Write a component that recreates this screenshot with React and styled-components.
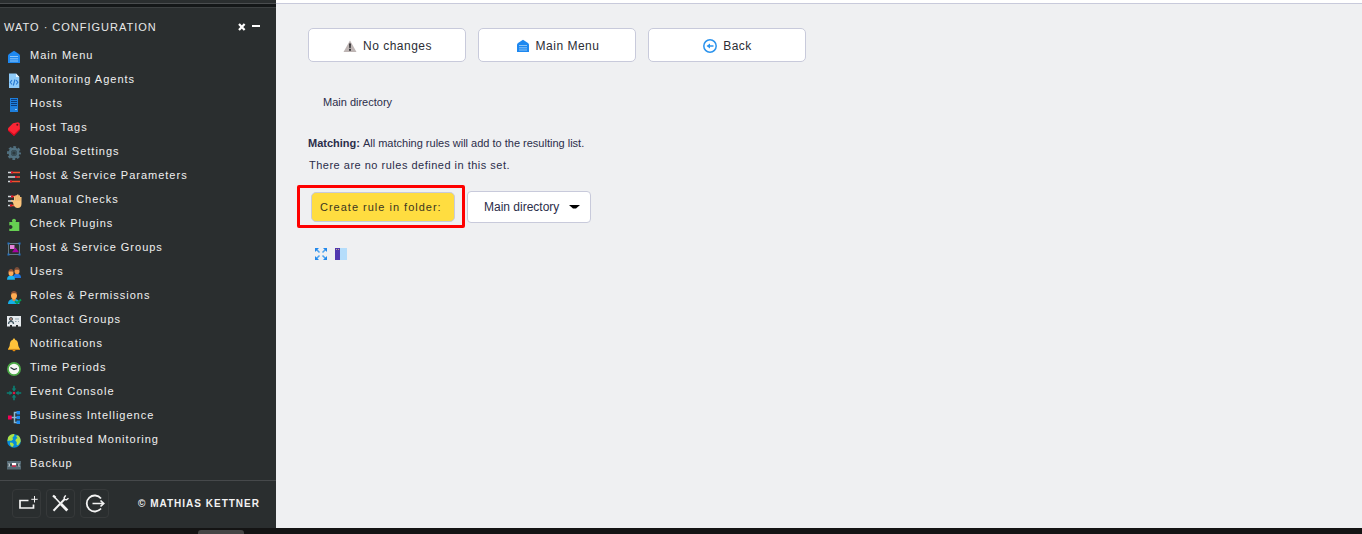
import React from "react";
import styled, { createGlobalStyle } from "styled-components";

const GlobalStyle = createGlobalStyle`
  * { box-sizing: border-box; }
  body {
    margin: 0;
    background: #eff0f2;
    font-family: "Liberation Sans", Arial, sans-serif;
    overflow: hidden;
  }
`;

const Screen = styled.div`
  width: 1362px;
  height: 534px;
  display: flex;
  flex-direction: column;
`;
const Workspace = styled.div`
  flex: 1;
  display: flex;
  min-height: 0;
`;
const Sidebar = styled.aside`
  width: 276px;
  background: #2a2e2f;
  display: flex;
  flex-direction: column;
`;
const SnapinGap = styled.div`
  height: 5px;
  margin-top: 3px;
  background: #141718;
  border-top: 1px solid #4a4d4f;
  border-bottom: 1px solid #3d4142;
`;
const SnapinHead = styled.header`
  height: 37px;
  padding: 0 15px 0 4px;
  display: flex;
  align-items: center;
  color: #e8e8e8;
  font-size: 11px;
  line-height: 14px;
  letter-spacing: 1px;
`;
const SnapinTitle = styled.span`
  flex: 1;
`;
const HeadIcons = styled.svg`
  width: 23px;
  height: 10px;
`;
const Menu = styled.ul`
  list-style: none;
  margin: 0;
  padding: 0;
  flex: 1;
`;
const MenuItem = styled.li`
  height: 24px;
  padding: 4px 0 4px 6px;
  display: flex;
  gap: 8px;
  color: #f0f0f0;
  font-size: 11px;
  line-height: 14px;
  letter-spacing: 1px;
  white-space: nowrap;
`;
const MenuLabel = styled.span`
  margin-top: -1px;
`;
const Icon = styled.svg`
  width: ${(p) => p.$size || 16}px;
  height: ${(p) => p.$size || 16}px;
  flex: none;
  overflow: visible;
`;
const Footer = styled.footer`
  height: 48px;
  border-top: 1px solid #46494b;
  padding: 0 16px 2px 12px;
  display: flex;
  align-items: center;
  gap: 5px;
`;
const FootButton = styled.span`
  width: 29px;
  height: 29px;
  border: 1px solid #36393a;
  border-radius: 4px;
  display: flex;
  align-items: center;
  justify-content: center;
`;
const Copyright = styled.span`
  flex: 1;
  text-align: right;
  color: #f2f2f2;
  font-size: 10px;
  font-weight: bold;
  letter-spacing: 1px;
  white-space: nowrap;
`;
const Main = styled.main`
  flex: 1;
  background: #eff0f2;
  border-top: 3px solid #fff;
`;
const Content = styled.div`
  border-top: 1px solid #c8cadb;
  padding: 24px 32px;
  color: #2b2d4a;
  font-size: 11px;
  line-height: 14px;
`;
const Toolbar = styled.nav`
  display: flex;
  gap: 12px;
`;
const ToolButton = styled.button`
  width: 158px;
  height: 34px;
  padding: 1px 0 0;
  border: 1px solid #c8cadb;
  border-radius: 5px;
  background: #fff;
  display: flex;
  align-items: center;
  justify-content: center;
  gap: 5px;
  color: #2b2d35;
  font: 12px "Liberation Sans", Arial, sans-serif;
  letter-spacing: 0.5px;
`;
const Breadcrumb = styled.div`
  margin: 33px 0 0 15px;
`;
const Matching = styled.p`
  margin: 27px 0 0;

  b {
    margin-right: 0.5px;
  }
`;
const EmptyNote = styled.p`
  margin: 8px 0 0 1px;
  letter-spacing: 0.5px;
`;
const RuleForm = styled.div`
  display: flex;
  align-items: center;
  gap: 2px;
  margin: 13px 0 0 -11px;
`;
const Highlight = styled.div`
  display: flex;
  width: 168px;
  height: 43px;
  padding: 4px 7px 3px 11px;
  border: 3px solid #fe0000;
  border-radius: 2px;
`;
const CreateButton = styled.button`
  width: 144px;
  height: 30px;
  border: 1px solid #c8cadb;
  border-radius: 5px;
  background: #ffdd40;
  color: #3b3520;
  padding: 0 0 0 8px;
  text-align: left;
  font: 11px "Liberation Sans", Arial, sans-serif;
  letter-spacing: 1px;
  white-space: nowrap;
`;
const FolderSelect = styled.div`
  width: 124px;
  height: 32px;
  border: 1px solid #c8cadb;
  border-radius: 4px;
  background: #fff;
  display: flex;
  align-items: center;
  justify-content: space-between;
  padding: 0 10px 0 16px;
  font-size: 12px;
  white-space: nowrap;
`;
const PageTools = styled.div`
  display: flex;
  gap: 4px;
  margin: 18px 0 0 5px;
`;
const Taskbar = styled.div`
  height: 6px;
  background: #141414;
  padding: 2px 0 0 198px;
`;
const TaskTab = styled.div`
  width: 46px;
  height: 4px;
  border-radius: 3px 3px 0 0;
  background: #454545;
`;

const params = (
  <>
    <path d="M2 3.5h4M2 8h8M2 12.500h3" stroke="#d5dbdf" strokeWidth="1.500" />
    <path d="M6 3.500h8M10 8h4M5 12.500h9" stroke="#f4512c" strokeWidth="1.500" />
    <path d="M5 2.500h2v2H5zM9 7h2v2H9zM4 11.500h2v2H4z" fill="#e0102c" />
  </>
);

const art = {
  menu: (
    <>
      <path d="M2 6.200L3 5l5-3.300L13 5l1 1.200V14H2z" fill="#1e88f0" />
      <path d="M4 7.500h8M4 9.800h8M4 12h8" stroke="#8cc5f7" strokeWidth="1" />
    </>
  ),
  agents: (
    <>
      <path d="M3 .5h7l3.300 3.500v11H3z" fill="#8ecbfa" />
      <path d="M10 .5v3.500h3.300z" fill="#e4f3fd" />
      <path d="M6 7L4.300 9.300 6 11.500M10.200 7l1.700 2.300-1.700 2.200M9 6.500l-1.700 6" fill="none" stroke="#2679d2" strokeWidth="1.100" />
    </>
  ),
  hosts: (
    <>
      <path d="M4 1h8v14H4z" fill="#1e7fdc" />
      <path d="M5 2.500h6M5 4.500h6M5 6.500h6M5 8.500h6" stroke="#0c3c79" strokeWidth="1" />
      <path d="M9 12.500h2" stroke="#8cc5f7" strokeWidth="1" />
    </>
  ),
  tags: (
    <>
      <path d="M7 2.200l5-1 1.600.8.4 6.500-6 6.300L2 9.500V7.300z" fill="#fb2534" />
      <path d="M2 8.600l6 4.700 6-5.800v1.300l-6 6.200-6-5.300z" fill="#d3091f" />
      <circle cx="11.300" cy="3.800" r="1" fill="#551a20" />
    </>
  ),
  settings: (
    <>
      <circle cx="8" cy="8" r="5.900" fill="none" stroke="#527180" strokeWidth="2.200" strokeDasharray="2.700 1.934" strokeDashoffset="1.350" />
      <circle cx="8" cy="8" r="4.200" fill="none" stroke="#527180" strokeWidth="2.600" />
      <circle cx="8" cy="8" r="3" fill="#3c545e" />
      <circle cx="8" cy="8" r="1.600" fill="#2d3a3f" />
    </>
  ),
  params,
  manual: (
    <>
      {params}
      <path d="M7 9.500L5 7.800l.8-1L8 8V3.200h1.500v-1H11v-.7h1.500v1H14v1.400h1.500V11c0 2.500-1.500 4-3.800 4-2.200 0-3-1.300-4-3z" fill="#fbc47c" />
      <path d="M9.600 3.500v4M11.200 2.500v5M12.900 3v4.500M14.200 4.500v3" stroke="#d99a52" strokeWidth=".5" />
    </>
  ),
  plugins: (
    <path d="M3.300 5H6.400a2 2 0 1 1 3.200 0H13.300v9H3.300v-2.400a2 2 0 1 0 0-3.200z" fill="#66cf52" />
  ),
  groups: (
    <>
      <rect x="2.500" y="2.500" width="11" height="11" fill="none" stroke="#607984" />
      <path d="M4 4h4.500v4H4z" fill="#e583da" />
      <path d="M9.500 6.500l3.500 4.700H6z" fill="#a900a4" />
      <path d="M1.500 1.500h2v2h-2zM12.500 1.500h2v2h-2zM1.500 12.500h2v2h-2zM12.500 12.500h2v2h-2z" fill="#2474c5" />
    </>
  ),
  users: (
    <>
      <path d="M7 13c0-3 1.500-4.200 4-4.200s4 1.200 4 4.200z" fill="#2179e6" />
      <ellipse cx="11" cy="6.200" rx="2.500" ry="3" fill="#f29a4f" />
      <path d="M8.200 6c0-5.200 5.600-5.200 5.600 0L12.500 4.800H9.300z" fill="#774b38" />
      <path d="M1 14.700c0-3 1.500-4.200 4-4.200s4 1.200 4 4.200z" fill="#1eb4ef" />
      <ellipse cx="5" cy="8" rx="2.500" ry="3" fill="#ffac5a" />
      <path d="M2.200 7.800c0-5.200 5.600-5.200 5.600 0L6.500 6.500H3.300z" fill="#955336" />
    </>
  ),
  roles: (
    <>
      <path d="M2 15c0-3.500 2-5 6-5s5.500 1.500 5.500 5z" fill="#16aee8" />
      <path d="M6.500 9h3v2.200L8 12.300l-1.500-1.100z" fill="#e88534" />
      <ellipse cx="8" cy="6.500" rx="3" ry="3.700" fill="#ffac52" />
      <path d="M4.800 6c-.2-5.500 6.600-5.500 6.400 0L9.500 4.300h-3z" fill="#8a5034" />
      <path d="M9 12.300l2 1.700 4-3.500" fill="none" stroke="#059952" strokeWidth="2" />
    </>
  ),
  contacts: (
    <>
      <path d="M1 3h14v10.500h-3V12h-2v1.500H6V12H4v1.500H1z" fill="#e6eaed" />
      <circle cx="5" cy="6" r="1.600" fill="#a27b6d" stroke="#37474f" strokeWidth=".8" />
      <path d="M2.500 11c0-3.500 5-3.500 5 0" fill="none" stroke="#455a64" strokeWidth="1.300" />
      <path d="M9 6h4M9 8.500h1.500M12 8.500h1" stroke="#90a4ae" />
    </>
  ),
  notifications: (
    <>
      <path d="M8 1.500c.8 0 1.300.7 1.300 1.400C12 3.700 12 6 12.300 8.500c.2 1.500 1.400 2.500 1.500 3.500H2.200c.1-1 1.300-2 1.500-3.500C4 6 4 3.700 6.700 2.900 6.700 2.200 7.200 1.500 8 1.500z" fill="#ffc33a" />
      <path d="M2 11.800h12v1H2z" fill="#f8a51d" />
      <path d="M6.500 13h3c0 1.700-3 1.700-3 0z" fill="#e88b0b" />
    </>
  ),
  time: (
    <>
      <circle cx="8" cy="8" r="6.100" fill="#f6f9f5" stroke="#4caa47" strokeWidth="1.700" />
      <path d="M4.500 6.500L8 8.500l3-1" fill="none" stroke="#263238" strokeWidth="1.200" />
    </>
  ),
  events: (
    <>
      <path d="M8 .8v5M8 10.200v5M.8 8h5M10.200 8h5" stroke="#0a8075" strokeWidth="1.600" />
      <path d="M5.700 3.400h4.600L8 6.500zM5.700 12.600h4.600L8 9.500zM3.400 5.700v4.600L6.500 8zM12.600 5.700v4.600L9.500 8z" fill="#0a8075" />
      <circle cx="8" cy="8" r="1.300" fill="#dc1745" />
    </>
  ),
  bi: (
    <>
      <path d="M5 8.500h6M11 3.500H8.500v10H11" fill="none" stroke="#8ab9d2" strokeWidth="1.500" />
      <path d="M2 6.500h3.700v4H2z" fill="#f50057" />
      <path d="M10.500 2H14v3.500h-3.500zM10.500 6.800H14v3.500h-3.500zM10.500 11.500H14V15h-3.500z" fill="#1c89ef" />
    </>
  ),
  globe: (
    <>
      <circle cx="8" cy="8" r="6.800" fill="#078cda" />
      <path d="M2 4.500C4 1.500 6.500.8 8.500 1.200L8 3 6.500 4.500 7 6.500 5 8 3.500 7.500 1.500 8zM4 9.500l2.500.3 1.500 2L6.500 14C4.500 13 3.800 11.500 4 9.500zM10 3l2-.8c2 1.800 3 3.800 2.600 6.500L13 11l-1.200 1.500-1.300-1 .3-2.500L9.300 7.700 10 6l1.500-1z" fill="#ace247" />
    </>
  ),
  backup: (
    <>
      <rect x="1" y="4" width="14" height="8.500" fill="#566a74" />
      <path d="M2 6.500h12v3H2z" fill="#b7c2c8" />
      <path d="M4 6.500h2v3H4zM10.200 6.500h2v3h-2zM1.500 7h1v2h-1zM13.500 7h1v2h-1z" fill="#37474f" />
      <path d="M6 6h4v2.300H6z" fill="#fff" />
      <path d="M6 8.300h4v1.500H6z" fill="#c41b3c" />
    </>
  ),
  warning: (
    <>
      <path d="M8 2.500L14.500 14h-13z" fill="#beb5b4" />
      <path d="M7 5.500h2l-.3 4.700H7.300zM7 11h2v1.700H7z" fill="#39373a" />
    </>
  ),
  back: (
    <>
      <circle cx="8" cy="8" r="6.200" fill="none" stroke="#2b93ed" strokeWidth="1.500" />
      <path d="M6.500 8h5" stroke="#2b93ed" strokeWidth="1.500" />
      <path d="M4.500 8L8 5.500v5z" fill="#2b93ed" />
    </>
  ),
  expand: (
    <>
      <path d="M3 3l3.500 3.500M13 3L9.500 6.500M3 13l3.500-3.500M13 13L9.500 9.500" stroke="#4ba2ee" strokeWidth="1.500" />
      <path d="M2 2h4L2 6zM14 2v4l-4-4zM2 14v-4l4 4zM14 14h-4l4-4z" fill="#2389ec" />
    </>
  ),
  panel: (
    <>
      <path d="M2 2h5v12H2z" fill="#5138b0" />
      <path d="M7 2h7v12H7z" fill="#b5ddfb" />
      <path d="M3 3h1v1H3zM5 3h1v1H5z" fill="#bda78b" />
    </>
  ),
};

const Glyph = ({ name }) => <Icon viewBox="0 0 16 16">{art[name]}</Icon>;

const items = [
  ["menu", "Main Menu"],
  ["agents", "Monitoring Agents"],
  ["hosts", "Hosts"],
  ["tags", "Host Tags"],
  ["settings", "Global Settings"],
  ["params", "Host & Service Parameters"],
  ["manual", "Manual Checks"],
  ["plugins", "Check Plugins"],
  ["groups", "Host & Service Groups"],
  ["users", "Users"],
  ["roles", "Roles & Permissions"],
  ["contacts", "Contact Groups"],
  ["notifications", "Notifications"],
  ["time", "Time Periods"],
  ["events", "Event Console"],
  ["bi", "Business Intelligence"],
  ["globe", "Distributed Monitoring"],
  ["backup", "Backup"],
];

export default function App() {
  return (
    <Screen>
      <GlobalStyle />
      <Workspace>
        <Sidebar>
          <SnapinGap />
          <SnapinHead>
            <SnapinTitle>WATO · CONFIGURATION</SnapinTitle>
            <HeadIcons viewBox="0 0 23 10" fill="none" stroke="#fff" strokeWidth="2.200">
              <path d="M1 2l5.600 6M6.600 2L1 8" />
              <path d="M14 4h8" strokeWidth="2" />
            </HeadIcons>
          </SnapinHead>
          <Menu>
            {items.map(([icon, label]) => (
              <MenuItem key={icon}>
                <Glyph name={icon} />
                <MenuLabel>{label}</MenuLabel>
              </MenuItem>
            ))}
          </Menu>
          <Footer>
            <FootButton>
              <Icon $size={21} viewBox="0 0 21 21" fill="none" stroke="#f4f4f4">
                <path d="M12.500 7.500H4v7.500h13.500v-3.500" strokeWidth="1.700" />
                <path d="M18.500 3v6.500M15.300 6.300h6.400" strokeWidth="1" />
              </Icon>
            </FootButton>
            <FootButton>
              <Icon $size={21} viewBox="0 0 21 21" fill="none" stroke="#f4f4f4">
                <path d="M3.500 3l7.500 8" strokeWidth="1.700" />
                <path d="M11 11l6.300 6.500" strokeWidth="2.800" />
                <path d="M3.500 17.700L15 5.800" strokeWidth="2" />
                <path d="M15.700 2.300l-1.500 2.200.3 2 2 .3 2-1.500" strokeWidth="1.400" />
                <path d="M3 2.500l2.500 2.200" strokeWidth="2.200" />
              </Icon>
            </FootButton>
            <FootButton>
              <Icon $size={21} viewBox="0 0 21 21" fill="none" stroke="#f4f4f4">
                <path d="M17 5.500a8 8 0 1 0 0 10" strokeWidth="1.800" />
                <path d="M8.500 10.500h11M16.500 7.500l3.200 3-3.200 3" strokeWidth="1.700" />
              </Icon>
            </FootButton>
            <Copyright>© MATHIAS KETTNER</Copyright>
          </Footer>
        </Sidebar>
        <Main>
          <Content>
            <Toolbar>
              <ToolButton><Glyph name="warning" />No changes</ToolButton>
              <ToolButton><Glyph name="menu" />Main Menu</ToolButton>
              <ToolButton><Glyph name="back" />Back</ToolButton>
            </Toolbar>
            <Breadcrumb>Main directory</Breadcrumb>
            <Matching><b>Matching:</b> All matching rules will add to the resulting list.</Matching>
            <EmptyNote>There are no rules defined in this set.</EmptyNote>
            <RuleForm>
              <Highlight>
                <CreateButton>Create rule in folder:</CreateButton>
              </Highlight>
              <FolderSelect>
                Main directory
                <Icon $size={11} viewBox="0 0 11 11">
                  <path d="M0 4h11L7 7.500H4z" fill="#000" />
                </Icon>
              </FolderSelect>
            </RuleForm>
            <PageTools>
              <Glyph name="expand" />
              <Glyph name="panel" />
            </PageTools>
          </Content>
        </Main>
      </Workspace>
      <Taskbar><TaskTab /></Taskbar>
    </Screen>
  );
}
